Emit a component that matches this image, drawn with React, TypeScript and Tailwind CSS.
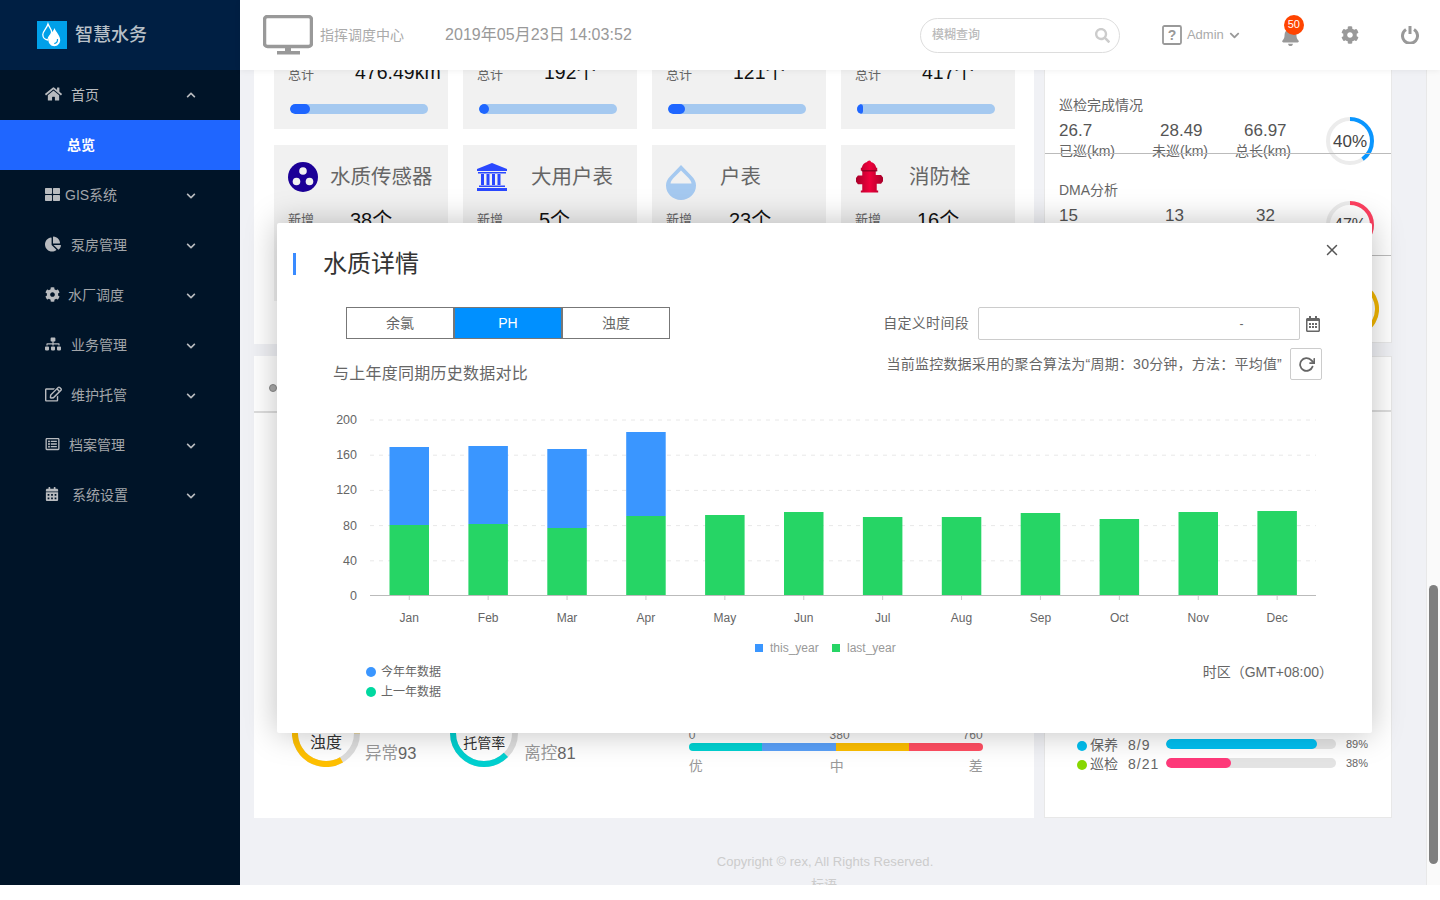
import { FaChartPie, FaChevronDown, FaChevronUp, FaCog, FaHome, FaRegCalendarAlt, FaRegEdit, FaRegListAlt, FaSearch, FaSitemap, FaThLarge, FaBell, FaCalendarAlt } from 'react-icons/fa';
import { FiRotateCw, FiX } from 'react-icons/fi';

const menu = [
  { icon: <FaThLarge className="w-[15px] h-[15px]" />, label: 'GIS系统', pl: 'ml-[5px]' },
  { icon: <FaChartPie className="w-[16px] h-[16px]" />, label: '泵房管理', pl: 'ml-[10px]' },
  { icon: <FaCog className="w-[15px] h-[15px]" />, label: '水厂调度', pl: 'ml-[8px]' },
  { icon: <FaSitemap className="w-[16px] h-[16px]" />, label: '业务管理', pl: 'ml-[10px]' },
  { icon: <FaRegEdit className="w-[17px] h-[16px]" />, label: '维护托管', pl: 'ml-[9px]' },
  { icon: <FaRegListAlt className="w-[15px] h-[14px]" />, label: '档案管理', pl: 'ml-[9px]' },
  { icon: <FaCalendarAlt className="w-[14px] h-[14px]" />, label: '系统设置', pl: 'ml-[13px]' },
];

const totals = [
  { value: '476.49km', fill: 'w-[20px]' },
  { value: '192个', fill: 'w-[10px]' },
  { value: '121个', fill: 'w-[17px]' },
  { value: '417个', fill: 'w-[6px]' },
];

const months = ['Jan', 'Feb', 'Mar', 'Apr', 'May', 'Jun', 'Jul', 'Aug', 'Sep', 'Oct', 'Nov', 'Dec'];
const lastTop = [525, 524, 528, 516, 515, 512, 517, 517, 513, 519, 512, 511];
const thisTop = [447, 446, 449, 432];

function Logo() {
  return (
    <svg width="30" height="28" viewBox="0 0 30 28">
      <rect width="30" height="28" fill="#00a0e9" />
      <path d="M11 3c1 3 3.600 5 3.600 8 0 1-.4 1.800-1 2.600-1.400 1.600-2.600 3.400-2.800 5.400-2.800-.2-5-2.600-5-5.400C5.800 10 10 7 11 3z" fill="none" stroke="#fff" strokeWidth="1.300" />
      <path d="M17.500 7c1.300 4 5.700 7.300 5.700 12 0 3.400-2.600 6.200-5.900 6.200s-5.900-2.800-5.900-6.200c0-4.700 4.800-8 6.100-12z" fill="#fff" />
      <path d="M20.500 18c.2 2.600-1.200 4.200-3.200 4.600" fill="none" stroke="#00a0e9" strokeWidth="1.200" />
    </svg>
  );
}

function Monitor() {
  return (
    <svg width="50" height="40" viewBox="0 0 50 40">
      <rect x="1.500" y="1.500" width="47" height="30" rx="3" fill="none" stroke="#999" strokeWidth="3.500" />
      <rect x="22" y="32" width="6" height="5" fill="#999" />
      <rect x="14" y="36" width="23" height="3.500" fill="#999" />
    </svg>
  );
}

function Sensor() {
  return (
    <svg width="30" height="30" viewBox="0 0 30 30">
      <circle cx="15" cy="15" r="15" fill="#1c0097" />
      <circle cx="15" cy="9" r="3.800" fill="#f1f1f1" />
      <circle cx="8.500" cy="19.500" r="3.800" fill="#f1f1f1" />
      <circle cx="21.500" cy="19.500" r="3.800" fill="#f1f1f1" />
    </svg>
  );
}

function Bank() {
  return (
    <svg width="30" height="28" viewBox="0 0 30 28" fill="#2a48ff">
      <path d="M15 0 30 6v2H0V6z" />
      <rect x="1" y="9" width="28" height="1.500" />
      <rect x="4" y="11" width="3" height="11" />
      <rect x="9.500" y="11" width="3" height="11" />
      <rect x="15" y="11" width="3" height="11" />
      <rect x="20.500" y="11" width="3" height="11" />
      <rect x="2" y="22.500" width="26" height="1.500" />
      <rect x="0" y="25" width="30" height="3" />
    </svg>
  );
}

function Drop() {
  return (
    <svg width="30" height="36" viewBox="0 0 30 36">
      <path d="M15 1 26 12.500c2.600 2.700 4 5.800 4 9C30 29.500 23.300 36 15 36S0 29.500 0 21.500c0-3.200 1.400-6.300 4-9z" fill="#a5c9f0" />
      <path d="M15 6.500 22.500 14c1.800 1.900 2.700 3.600 3 5.500h-21c.3-1.900 1.200-3.600 3-5.500z" fill="#f1f1f1" />
    </svg>
  );
}

function Hydrant() {
  return (
    <svg width="27" height="33" viewBox="0 0 28 33">
      <defs>
        <linearGradient id="hy" x1="0" x2="1" y1="0" y2="0">
          <stop offset="0" stopColor="#a8002a" />
          <stop offset="0.500" stopColor="#f0003c" />
          <stop offset="1" stopColor="#a8002a" />
        </linearGradient>
      </defs>
      <path d="M14 0c1 0 1.500.8 1.500 1.500 3 .8 5 3 5.500 6h1v3h-1.500v4.500H26l2 2.500v4l-2 2.500h-4.500V31H23v2H5v-2h1.500v-6.500H2L0 22v-4l2-2.500h4.500V10.500H5v-3h1c.5-3 2.500-5.200 5.500-6C11.500.8 13 0 14 0z" fill="url(#hy)" />
      <rect x="6" y="10" width="16" height="1.200" fill="#7d0020" />
    </svg>
  );
}

function Ring({ size, stroke, color, track, start, sweep, children }: { size: number; stroke: number; color: string; track: string; start: number; sweep: number; children?: React.ReactNode }) {
  const r = (size - stroke) / 2;
  const c = 2 * Math.PI * r;
  return (
    <div className="relative shrink-0 flex items-center justify-center" style={{ width: size, height: size }}>
      <svg width={size} height={size} className="absolute inset-0">
        <circle cx={size / 2} cy={size / 2} r={r} fill="none" stroke={track} strokeWidth={stroke} />
        <circle
          cx={size / 2}
          cy={size / 2}
          r={r}
          fill="none"
          stroke={color}
          strokeWidth={stroke}
          strokeDasharray={`${(c * sweep) / 360} ${c}`}
          transform={`rotate(${start} ${size / 2} ${size / 2})`}
        />
      </svg>
      {children}
    </div>
  );
}

function Card({ icon, iconBox, title, titleGap, value, valueGap }: { icon: React.ReactNode; iconBox: string; title: string; titleGap: string; value: string; valueGap: string }) {
  return (
    <div className="w-[174px] shrink-0 h-[156px] bg-[#f1f1f1] px-[14px] relative">
      <div className="h-[63px] flex items-center">
        <div className={iconBox}>{icon}</div>
        <span className={`mt-[1px] text-[20.500px] text-[#666] whitespace-nowrap ${titleGap}`}>{title}</span>
      </div>
      <div className="flex items-center h-[24px]">
        <span className="text-[13px] text-[#666] w-[28px]">新增</span>
        <span className={`text-[20px] text-[#111] whitespace-nowrap ${valueGap}`}>{value}</span>
      </div>
    </div>
  );
}

function ChartSvg() {
  return (
    <svg width="1095" height="262" viewBox="277 400 1095 262" className="block">
      {[200, 160, 120, 80, 40].map((v, i) => (
        <line key={v} x1="370" x2="1316" y1={420 + i * 35.2} y2={420 + i * 35.2} stroke="#e8e8e8" strokeDasharray="4 5" />
      ))}
      {[200, 160, 120, 80, 40, 0].map((v, i) => (
        <text key={v} x="357" y={424 + i * 35.2} textAnchor="end" fontSize="12.500" fill="#666">{v}</text>
      ))}
      {months.map((m, i) => {
        const x = 389.500 + i * 78.900;
        const top = thisTop[i];
        return (
          <g key={m}>
            {top && <rect x={x} y={top} width="39.500" height={lastTop[i] - top} fill="#3a96ff" />}
            <rect x={x} y={lastTop[i]} width="39.500" height={596 - lastTop[i]} fill="#26d565" />
            <line x1={x + 19.750} x2={x + 19.750} y1="596" y2="600" stroke="#ccc" />
            <text x={x + 19.750} y="622" textAnchor="middle" fontSize="12" fill="#666">{m}</text>
          </g>
        );
      })}
      <line x1="370" x2="1316" y1="595.500" y2="595.500" stroke="#bbb" />
      <rect x="755" y="644" width="8" height="8" fill="#3a96ff" />
      <text x="770" y="652" fontSize="12" fill="#999">this_year</text>
      <rect x="832" y="644" width="8" height="8" fill="#26d565" />
      <text x="847" y="652" fontSize="12" fill="#999">last_year</text>
    </svg>
  );
}

function Modal() {
  return (
    <div className="absolute left-[37px] top-[153px] w-[1095px] h-[510px] bg-white rounded-[2px] shadow-[0_0_32px_rgba(0,0,0,0.25)] flex flex-col">
      <div className="h-[84px] flex items-start pt-[23px] relative">
        <div className="w-[3px] h-[22px] bg-[#3a8bff] ml-[16px] mt-[7px]" />
        <span className="ml-[27px] text-[24px] leading-[36px] text-[#333]">水质详情</span>
        <FiX className="absolute right-[31px] top-[18px] w-[18px] h-[18px] text-[#555]" />
      </div>
      <div className="flex justify-between pl-[69px] pr-[51px]">
        <div className="flex h-[32px] w-[324px] border border-[#777] text-[14px] text-[#666]">
          <div className="flex-1 flex items-center justify-center">余氯</div>
          <div className="flex-1 flex items-center justify-center bg-[#0090ff] text-white border-x-2 border-[#777]">PH</div>
          <div className="flex-1 flex items-center justify-center">浊度</div>
        </div>
        <div className="flex items-center h-[33px]">
          <span className="text-[14px] tracking-[0.3px] text-[#666] mr-[9px]">自定义时间段</span>
          <div className="w-[322px] h-[33px] border border-[#ccc] rounded-[2px] flex items-center justify-center pl-[205px] text-[12px] text-[#666]">-</div>
          <FaRegCalendarAlt className="ml-[5px] w-[16px] h-[16px] text-[#666]" />
        </div>
      </div>
      <div className="flex justify-between pl-[56px] pr-[50px] mt-[8px] h-[32px]">
        <span className="text-[16px] tracking-[0.25px] leading-[24px] text-[#666] mt-[14px]">与上年度同期历史数据对比</span>
        <div className="flex items-center">
          <span className="text-[14px] tracking-[0.22px] text-[#666] mr-[8px] whitespace-nowrap">当前监控数据采用的聚合算法为“周期：30分钟，方法：平均值”</span>
          <div className="w-[32px] h-[32px] border border-[#ccc] rounded-[2px] flex items-center justify-center">
            <FiRotateCw className="w-[17px] h-[17px] text-[#666] stroke-[2.500]" />
          </div>
        </div>
      </div>
      <div className="mt-[20px]">
        <ChartSvg />
      </div>
      <div className="flex justify-between pl-[89px] pr-[39px]">
        <div className="text-[12px] leading-[20px] text-[#666]">
          <div className="flex items-center">
            <span className="w-[10px] h-[10px] rounded-full bg-[#3a96ff] mr-[5px]" />今年年数据
          </div>
          <div className="flex items-center">
            <span className="w-[10px] h-[10px] rounded-full bg-[#00d8a0] mr-[5px]" />上一年数据
          </div>
        </div>
        <span className="text-[14px] leading-[20px] text-[#666]">时区（GMT+08:00）</span>
      </div>
    </div>
  );
}

export default function App() {
  return (
    <div className="h-[885px] w-[1440px] flex overflow-hidden font-['Liberation_Sans','Noto_Sans_CJK_SC',sans-serif]">
      <aside className="w-[240px] shrink-0 bg-[#001428] flex flex-col">
        <div className="h-[70px] bg-[#001f43] flex items-center pl-[37px]">
          <Logo />
          <span className="ml-[8px] text-[18px] font-medium text-[#b8c0c8]">智慧水务</span>
        </div>
        <div className="h-[50px] flex items-center pl-[45px] pr-[44px] text-[#b8bbbf]">
          <FaHome className="w-[17px] h-[16px] -mt-[2px]" />
          <span className="ml-[9px] text-[14px]">首页</span>
          <FaChevronUp className="ml-auto w-[10px] h-[10px]" />
        </div>
        <div className="h-[50px] bg-[#1f66ff] flex items-center pl-[67px] text-[14px] font-bold text-white">总览</div>
        {menu.map((m) => (
          <div key={m.label} className="h-[50px] flex items-center pl-[45px] pr-[44px] text-[#a2a5a9]">
            <span className="text-[#b8bbbf] -mt-[2px]">{m.icon}</span>
            <span className={`${m.pl} text-[14px]`}>{m.label}</span>
            <FaChevronDown className="ml-auto w-[10px] h-[10px] text-[#b8bbbf] mt-[1px]" />
          </div>
        ))}
      </aside>

      <div className="flex-1 min-w-0 flex flex-col">
        <header className="h-[70px] shrink-0 bg-white flex items-center pl-[23px] relative z-10 shadow-[0_1px_6px_rgba(0,0,0,0.06)]">
          <Monitor />
          <span className="ml-[7px] text-[14px] text-[#aaa]">指挥调度中心</span>
          <span className="ml-[41px] text-[16px] tracking-[0.05px] text-[#999]">2019年05月23日 14:03:52</span>
          <div className="ml-[288px] w-[200px] h-[35px] border border-[#ddd] rounded-full flex items-center pl-[11px] pr-[9px]">
            <span className="text-[12px] font-medium text-[#bbb]">模糊查询</span>
            <FaSearch className="ml-auto w-[15px] h-[15px] text-[#ccc]" />
          </div>
          <svg width="20" height="20" viewBox="0 0 20 20" className="ml-[42px]">
            <rect x="1" y="1" width="18" height="18" rx="1.500" fill="none" stroke="#999" strokeWidth="1.800" />
            <text x="10" y="15" textAnchor="middle" fontSize="14" fontWeight="700" fill="#999">?</text>
          </svg>
          <span className="ml-[5px] text-[13px] text-[#aaa]">Admin</span>
          <FaChevronDown className="ml-[5px] w-[11px] h-[11px] text-[#999]" />
          <div className="ml-[41px] relative">
            <FaBell className="w-[19px] h-[19px] text-[#999] mt-[2px]" />
            <span className="absolute -top-[10px] left-[3px] w-[20px] h-[20px] rounded-full bg-[#ff4400] text-white text-[11px] flex items-center justify-center">50</span>
          </div>
          <FaCog className="ml-[41px] w-[18px] h-[18px] text-[#999]" />
          <svg width="18" height="18" viewBox="0 0 18 18" className="ml-[42px]" fill="none" stroke="#999" strokeWidth="3">
            <path d="M5 3.500a7.500 7.500 0 1 0 8 0" />
            <path d="M9 0v8" />
          </svg>
        </header>

        <div className="flex-1 min-h-0 flex">
          <main className="flex-1 min-w-0 bg-[#f0f1f5] relative overflow-hidden">
            <div className="-mt-[117px] pl-[14px]">
              <div className="flex gap-[10px]">
                <section className="w-[780px] h-[391px] bg-white p-[20px]">
                  <div className="h-[156px] flex gap-[15px]">
                    {totals.map((t) => (
                      <div key={t.value} className="w-[174px] shrink-0 h-[156px] bg-[#f1f1f1] px-[14px] flex flex-col justify-end pb-[15px]">
                        <div className="flex items-center h-[24px] mb-[17px]">
                          <span className="text-[13px] text-[#666] w-[28px] shrink-0 whitespace-nowrap">总计</span>
                          <span className="ml-[39px] -mt-[4px] shrink-0 text-[19.500px] text-[#111] whitespace-nowrap">{t.value}</span>
                        </div>
                        <div className="ml-[2px] h-[10px] w-[138px] rounded-full bg-[#a5c9f0] overflow-hidden">
                          <div className={`h-full rounded-full bg-[#1f66ff] ${t.fill}`} />
                        </div>
                      </div>
                    ))}
                  </div>
                  <div className="mt-[16px] flex gap-[15px]">
                    <Card icon={<Sensor />} iconBox="w-[30px]" title="水质传感器" titleGap="ml-[12px]" value="38个" valueGap="ml-[34px]" />
                    <Card icon={<Bank />} iconBox="w-[30px]" title="大用户表" titleGap="ml-[24px]" value="5个" valueGap="ml-[34px]" />
                    <Card icon={<Drop />} iconBox="w-[30px] mt-[10px]" title="户表" titleGap="ml-[24px]" value="23个" valueGap="ml-[35px]" />
                    <Card icon={<Hydrant />} iconBox="w-[27px] ml-[1px]" title="消防栓" titleGap="ml-[26px]" value="16个" valueGap="ml-[34px]" />
                  </div>
                </section>
                <section className="w-[348px] h-[390px] bg-white border border-[#e8e8e8] flex flex-col justify-end">
                  <div className="h-[85px] pl-[14px] pt-[27px] pr-[16px] relative">
                    <div className="absolute left-[281px] top-[49px]">
                      <Ring size={48} stroke={4} color="#0a96ff" track="#ececec" start={-90} sweep={144}>
                        <span className="text-[17px] text-[#444] mt-[2px]">40%</span>
                      </Ring>
                    </div>
                    <div className="text-[14px] leading-[20px] text-[#666]">巡检完成情况</div>
                    <div className="flex text-[17px] leading-[24px] mt-[4px] text-[#555]">
                      <span className="w-[101px]">26.7</span>
                      <span className="w-[84px]">28.49</span>
                      <span>66.97</span>
                    </div>
                    <div className="flex text-[14px] leading-[18px] -mt-[1px] text-[#666] whitespace-nowrap">
                      <span className="w-[93px]">已巡(km)</span>
                      <span className="w-[83px]">未巡(km)</span>
                      <span>总长(km)</span>
                    </div>
                  </div>
                  <div className="h-[102px] border-t border-[#bbb] pl-[14px] pt-[26px] relative z-0">
                    <div className="absolute left-[281px] top-[47px]">
                      <Ring size={48} stroke={4} color="#ff4060" track="#ececec" start={-90} sweep={169}>
                        <span className="text-[16px] text-[#444]">47%</span>
                      </Ring>
                    </div>
                    <div className="text-[14px] leading-[20px] text-[#666]">DMA分析</div>
                    <div className="flex text-[17px] leading-[24px] mt-[4px] text-[#555]">
                      <span className="w-[106px]">15</span>
                      <span className="w-[91px]">13</span>
                      <span>32</span>
                    </div>
                  </div>
                  <div className="h-[87px] border-t border-[#bbb] relative">
                    <div className="absolute left-[278px] top-[25px]">
                      <Ring size={56} stroke={4} color="#f2b600" track="#ececec" start={-60} sweep={150} />
                    </div>
                  </div>
                </section>
              </div>

              <div className="flex gap-[10px] mt-[12px]">
                <section className="w-[780px] h-[462px] bg-white flex flex-col">
                  <div className="h-[57px] border-b-2 border-[#ddd] flex items-center pl-[15px] pt-[8px]">
                    <span className="w-[8px] h-[8px] rounded-full bg-[#aaa] border border-[#888]" />
                  </div>
                  <div className="flex-1 flex items-end pb-[51px] pl-[38px]">
                    <Ring size={68} stroke={6} color="#ffc000" track="#ddd" start={60} sweep={300}>
                      <span className="text-[16px] text-[#333] mt-[20px]">浊度</span>
                    </Ring>
                    <span className="ml-[5px] mb-[1px] text-[16.500px] text-[#999]">异常<span className="text-[#666]">93</span></span>
                    <div className="ml-[34px]">
                      <Ring size={68} stroke={6} color="#00d0d0" track="#ddd" start={45} sweep={260}>
                        <span className="text-[14px] text-[#333] mt-[20px]">托管率</span>
                      </Ring>
                    </div>
                    <span className="ml-[6px] mb-[1px] text-[16.500px] text-[#999]">离控<span className="text-[#666]">81</span></span>
                    <div className="ml-[113px] w-[294px] mb-[-9px] self-end">
                      <div className="flex text-[12px] leading-[14px] text-[#777] whitespace-nowrap">
                        <span className="w-[145px]">0</span>
                        <span className="w-[137px]">380</span>
                        <span>760</span>
                      </div>
                      <div className="flex h-[8px] rounded-full overflow-hidden mt-[1px]">
                        <div className="flex-1 bg-[#00d2d2]" />
                        <div className="flex-1 bg-[#5aa0f8]" />
                        <div className="flex-1 bg-[#fcbe00]" />
                        <div className="flex-1 bg-[#ff4e62]" />
                      </div>
                      <div className="flex text-[14px] leading-[20px] text-[#999] mt-[5px] whitespace-nowrap">
                        <span className="w-[144px]">优</span>
                        <span className="w-[142px]">中</span>
                        <span>差</span>
                      </div>
                    </div>
                  </div>
                </section>
                <section className="w-[348px] h-[462px] bg-white border border-[#e8e8e8] flex flex-col justify-end pb-[43px] pl-[32px]">
                  <div className="border-t-2 border-[#ddd] -ml-[32px] mb-[324px]" />
                  {[
                    { dot: 'bg-[#00bff0]', name: '保养', val: '8/9', bar: 'bg-[#00bff0] w-[151px]', pct: '89%' },
                    { dot: 'bg-[#88d800]', name: '巡检', val: '8/21', bar: 'bg-[#ff3a7a] w-[65px]', pct: '38%' },
                  ].map((r) => (
                    <div key={r.name} className="flex items-center h-[19px]">
                      <span className={`w-[10px] h-[10px] rounded-full ${r.dot}`} />
                      <span className="ml-[3px] text-[14px] text-[#666] w-[38px]">{r.name}</span>
                      <span className="text-[14px] tracking-[1px] text-[#666] w-[38px] whitespace-nowrap">{r.val}</span>
                      <div className="w-[170px] h-[10px] rounded-full bg-[#e4e4e4] overflow-hidden -mt-[3px]">
                        <div className={`h-full rounded-full ${r.bar}`} />
                      </div>
                      <span className="ml-[10px] text-[11px] text-[#666] -mt-[3px]">{r.pct}</span>
                    </div>
                  ))}
                </section>
              </div>

              <div className="mt-[36px] w-[1142px] text-center text-[13px] leading-[16px] text-[#ccc] tracking-[0.05px]">
                <div>Copyright © rex, All Rights Reserved.</div>
                <div className="mt-[7px] -ml-[2px]">标语</div>
              </div>
            </div>
            <Modal />
          </main>
          <div className="w-[14px] shrink-0 bg-[#fafafa] border-l border-[#e8e8e8] pl-[2px] pt-[515px]">
            <div className="w-[9px] h-[279px] rounded-full bg-[#7f7f7f]" />
          </div>
        </div>
      </div>
    </div>
  );
}
